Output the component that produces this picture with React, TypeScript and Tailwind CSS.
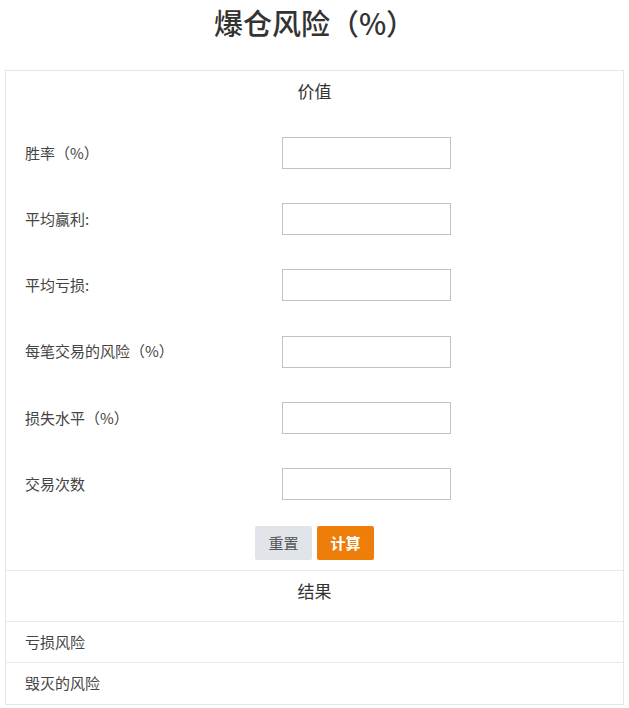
import React from 'react';

const fields = ['胜率（%）', '平均赢利:', '平均亏损:', '每笔交易的风险（%）', '损失水平（%）', '交易次数'];

const App: React.FC = () => {
  return (
    <div className="w-[629px] min-h-[708px] bg-white text-[#333] font-['Noto_Sans_CJK_SC','Noto_Sans',sans-serif]">
      <h1 className="text-center text-[29px] font-medium leading-[44px] mb-[26px] text-[#333]">爆仓风险（%）</h1>

      <div className="mx-[5px] border border-[#e6e6e6]">
        {/* Inputs */}
        <div className="h-10 flex items-center justify-center text-[17px] text-[#333]">价值</div>
        <div className="flex flex-col gap-[34.2px] pt-[26px]">
          {fields.map((label) => (
            <div key={label} className="flex items-center pl-[19px]">
              <span className="w-[257px] text-[15px] text-[#444]">{label}</span>
              <input type="text" className="w-[169px] h-[32px] border border-[#c2c2c2] outline-none px-2 text-sm" />
            </div>
          ))}
        </div>
        <div className="flex justify-center gap-[5px] mt-[26px] mb-[10px]">
          <button className="w-[57px] h-[34px] rounded-[2px] bg-[#e1e5ea] text-[#555] text-[15px]">重置</button>
          <button className="w-[57px] h-[34px] rounded-[2px] bg-[#ee7e0a] text-white text-[15px] font-bold">计算</button>
        </div>

        {/* Results */}
        <div className="border-t border-[#e6ebf0] pb-[10px]">
          <div className="h-10 flex items-center justify-center text-[17px] text-[#333]">结果</div>
        </div>
        <div className="border-t border-[#e6ebf0] h-[41px] flex items-center pl-[19px] text-[15px] text-[#444]">亏损风险</div>
        <div className="border-t border-[#e6ebf0] h-[42px] flex items-center pl-[19px] text-[15px] text-[#444]">毁灭的风险</div>
      </div>
    </div>
  );
};

export default App;
